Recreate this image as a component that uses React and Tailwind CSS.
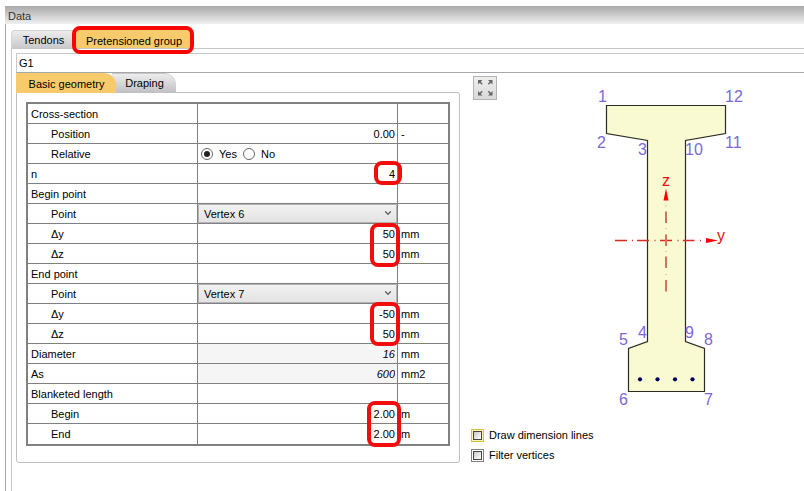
import { useState } from "react";
import { ChevronDown } from "lucide-react";

const ROWS = [
  { label: "Cross-section" },
  { label: "Position", indent: true, value: "0.00", unit: "-" },
  { label: "Relative", indent: true, kind: "radio" },
  { label: "n", value: "4", mark: "-right-[5px] -top-[3px] h-6 w-7" },
  { label: "Begin point" },
  { label: "Point", indent: true, kind: "select", value: "Vertex 6" },
  { label: "Δy", indent: true, value: "50", unit: "mm", mark: "-right-[3px] -top-px h-11 w-[30px]" },
  { label: "Δz", indent: true, value: "50", unit: "mm" },
  { label: "End point" },
  { label: "Point", indent: true, kind: "select", value: "Vertex 7" },
  { label: "Δy", indent: true, value: "-50", unit: "mm", mark: "-right-[3px] -top-[2px] h-11 w-[30px]" },
  { label: "Δz", indent: true, value: "50", unit: "mm" },
  { label: "Diameter", value: "16", unit: "mm", readOnly: true },
  { label: "As", value: "600", unit: "mm2", readOnly: true },
  { label: "Blanketed length" },
  { label: "Begin", indent: true, value: "2.00", unit: "m", mark: "-right-[4px] -top-[3px] h-[46px] w-[34px]" },
  { label: "End", indent: true, value: "2.00", unit: "m" },
];

const VERTICES = ["Vertex 1", "Vertex 2", "Vertex 3", "Vertex 4", "Vertex 5", "Vertex 6", "Vertex 7", "Vertex 8", "Vertex 9", "Vertex 10", "Vertex 11", "Vertex 12"];

const VERTEX_LABELS = [
  ["1", 5, 16], ["12", 132, 16], ["2", 4, 62], ["11", 132, 62],
  ["3", 45, 69], ["10", 92, 69], ["4", 45, 252], ["9", 92, 252],
  ["5", 26, 259], ["8", 111, 259], ["6", 26, 319], ["7", 111, 319],
];

function RadioPair() {
  const [relative, setRelative] = useState(true);
  const dot =
    "grid size-3 appearance-none place-content-center rounded-full border border-[#666] bg-white before:size-[6px] before:rounded-full checked:before:bg-[#222]";
  return (
    <div className="flex h-[19px] items-center pl-[3px]">
      <label className="flex items-center gap-[6px]">
        <input type="radio" name="relative" className={dot} checked={relative} onChange={() => setRelative(true)} />
        Yes
      </label>
      <label className="ml-[6px] flex items-center gap-[6px]">
        <input type="radio" name="relative" className={dot} checked={!relative} onChange={() => setRelative(false)} />
        No
      </label>
    </div>
  );
}

function ValueCell({ row, id }) {
  if (row.kind === "radio") return <RadioPair />;
  if (row.kind === "select")
    return (
      <div className="relative">
        <select
          id={id}
          defaultValue={row.value}
          className="block h-[19px] w-full appearance-none border border-[#b4b4b4] bg-linear-to-b from-[#f2f2f2] to-[#e3e3e3] pl-[5px] leading-4"
        >
          {VERTICES.map((v) => (
            <option key={v}>{v}</option>
          ))}
        </select>
        <ChevronDown size={10} strokeWidth={3} className="pointer-events-none absolute right-1 top-1 text-[#606060]" />
      </div>
    );
  if (!row.value) return null;
  return (
    <input
      id={id}
      type="text"
      defaultValue={row.value}
      readOnly={row.readOnly}
      className={`block h-[19px] w-full pr-[2px] pt-px text-right outline-none ${row.readOnly ? "bg-[#f5f5f5] italic" : "bg-white"}`}
    />
  );
}

function PropertyTable() {
  return (
    <table className="w-full table-fixed border-separate border-spacing-0 border-2 border-[#808080]">
      <colgroup>
        <col className="w-[170px]" />
        <col />
        <col className="w-[50px]" />
      </colgroup>
      <tbody>
        {ROWS.map((row, i) => {
          const line = i < ROWS.length - 1 ? "border-b" : "";
          const id = `property-${i}`;
          return (
            <tr key={id} className="h-5 align-top">
              <th scope="row" className={`h-5 border-r border-[#808080] p-0 text-left font-normal ${line} ${row.indent ? "pl-[23px]" : "pl-[3px]"}`}>
                {row.value ? <label htmlFor={id} className="block pt-[2px]">{row.label}</label> : <span className="block pt-[2px]">{row.label}</span>}
              </th>
              <td className={`relative h-5 border-r border-[#808080] p-0 ${line}`}>
                <ValueCell row={row} id={id} />
                {row.mark && (
                  <span className={`pointer-events-none absolute z-10 rounded-lg border-4 border-[#f20d0d] ${row.mark}`} />
                )}
              </td>
              <td className={`h-5 border-[#808080] p-0 pl-[3px] ${line}`}>
                <span className="block pt-[2px]">{row.unit}</span>
              </td>
            </tr>
          );
        })}
      </tbody>
    </table>
  );
}

function SectionDrawing() {
  return (
    <svg width="160" height="329" viewBox="0 0 160 329" className="mt-[10px] shrink-0" role="img" aria-label="Cross-section">
      <polygon
        points="13.5,19.5 132.5,19.5 132.5,47.5 92.5,54.5 92.5,255.5 111.5,262.5 111.5,305.5 35.5,305.5 35.5,262.5 54.5,255.5 54.5,54.5 13.5,47.5"
        fill="#f9f9d2"
        stroke="#2b2b22"
        strokeWidth="1.2"
      />
      <g fill="none" strokeWidth="1.3">
        <path
          stroke="#d92b20"
          d="M22 154.5H34M39 154.5h1M44 154.5H56M61.5 154.5h1M67 154.5H79M84.5 154.5h1M90 154.5H101.500M107 154.5h1"
        />
        <path
          stroke="#d9705c"
          strokeWidth="2"
          d="M73 125.500V137M73 148.500V160M73 170.500V182M73 194V205.500"
        />
        <path stroke="#e3a08c" d="M73 119.500v1M73 142v1M73 165v1M73 188v1" />
      </g>
      <path fill="#f00" d="M73 102.500L75.500 114.500H70.500ZM125 154.500L113 157V152Z" />
      {[47, 64.5, 82, 99.5].map((x) => (
        <circle key={x} cx={x} cy="293.3" r="2.1" fill="#00005e" />
      ))}
      <g className="text-base" fill="#7b68d6">
        {VERTEX_LABELS.map(([label, x, y]) => (
          <text key={label} x={x} y={y}>{label}</text>
        ))}
      </g>
      <g className="text-base" fill="#e81010">
        <text x="69" y="100">z</text>
        <text x="124" y="155">y</text>
      </g>
    </svg>
  );
}

function Option({ label, highlight }) {
  return (
    <label className="flex h-5 items-center gap-[5px]">
      <input
        type="checkbox"
        className={`grid size-[13px] appearance-none place-content-center border before:size-[9px] before:border before:border-[#444] before:bg-linear-to-br before:from-[#c8c8c8] before:to-white checked:before:bg-[#444] ${
          highlight ? "border-[#d8c43c] bg-[#fdf6b4]" : "border-[#808080] bg-white"
        }`}
      />
      {label}
    </label>
  );
}

export default function App() {
  return (
    <div className="flex min-h-screen flex-col overflow-x-hidden bg-white pl-[5px] pt-[6px] font-['Liberation_Sans',Arial,sans-serif] text-[11px] leading-4 text-black">
      <header className="h-[18px] bg-linear-to-b from-[#a9a9a9] to-[#f0f0f0] pl-[3px] pt-[2px] text-[#333]">
        <h1>Data</h1>
      </header>
      <main className="flex flex-1 flex-col border-l border-[#aaa] pl-[5px] pt-[6px]">
        <nav className="flex h-[18px]" aria-label="Groups">
          <button type="button" className="w-[62px] rounded-tl-sm border-l border-t border-[#d4d4d4] bg-linear-to-b from-[#ededed] to-[#c9c9cb] pl-[2px]">
            Tendons
          </button>
          <button type="button" className="relative w-[120px] rounded-t-md bg-[#f7cb6b] pl-[2px] pt-[3px]">
            Pretensioned group
            <span className="pointer-events-none absolute -left-px -top-[4px] z-10 h-7 w-[122px] rounded-lg border-4 border-[#f80505]" />
          </button>
        </nav>
        <div className="flex-1 border-l border-t border-[#c8c8c8] pl-1 pt-1">
          <input
            type="text"
            aria-label="Group name"
            defaultValue="G1"
            className="block h-5 w-full border-b border-l border-t border-b-[#a6a6ac] border-l-[#c8c8c8] border-t-[#c8c8c8] pl-[2px] outline-none"
          />
          <div className="flex">
            <section className="w-[444px] shrink-0">
              <nav className="flex h-[19px]" aria-label="Properties">
                <button type="button" className="relative z-10 h-5 w-[100px] rounded-tr-xl bg-[#f7cb6b] pl-px pt-[2px]">
                  Basic geometry
                </button>
                <button type="button" className="-ml-1 w-16 rounded-tr-xl border-t border-[#c8c8c8] bg-linear-to-b from-[#ededed] to-[#c2c2c6] pl-px">
                  Draping
                </button>
              </nav>
              <div className="rounded-[3px] rounded-tl-none border border-[#c0c0c0] px-[9px] pb-4 pt-[9px]">
                <PropertyTable />
              </div>
            </section>
            <aside className="flex flex-1 flex-col pl-[11px] pt-[3px]">
              <div className="flex items-start gap-24 pl-[2px]">
                <button
                  type="button"
                  aria-label="Fit to view"
                  className="grid size-6 shrink-0 place-content-center border border-[#b4b4b4] bg-linear-to-b from-[#efefef] to-[#d9d9d9]"
                >
                  <svg width="22" height="22" viewBox="0 0 22 22" fill="#666" stroke="#666" strokeWidth="1.5">
                    <path stroke="none" d="M4 3h4.500L4 7.500ZM18.500 3H14l4.500 4.500ZM4 18.500h4.500L4 14ZM18.500 18.500H14l4.500-4.500Z" />
                    <path d="M5 4l3.200 3.200M17.500 4l-3.200 3.200M5 17.500l3.200-3.200M17.500 17.500l-3.200-3.200" />
                  </svg>
                </button>
                <SectionDrawing />
              </div>
              <div className="pt-[10px]">
                <Option label="Draw dimension lines" highlight />
                <Option label="Filter vertices" />
              </div>
            </aside>
          </div>
        </div>
      </main>
    </div>
  );
}
